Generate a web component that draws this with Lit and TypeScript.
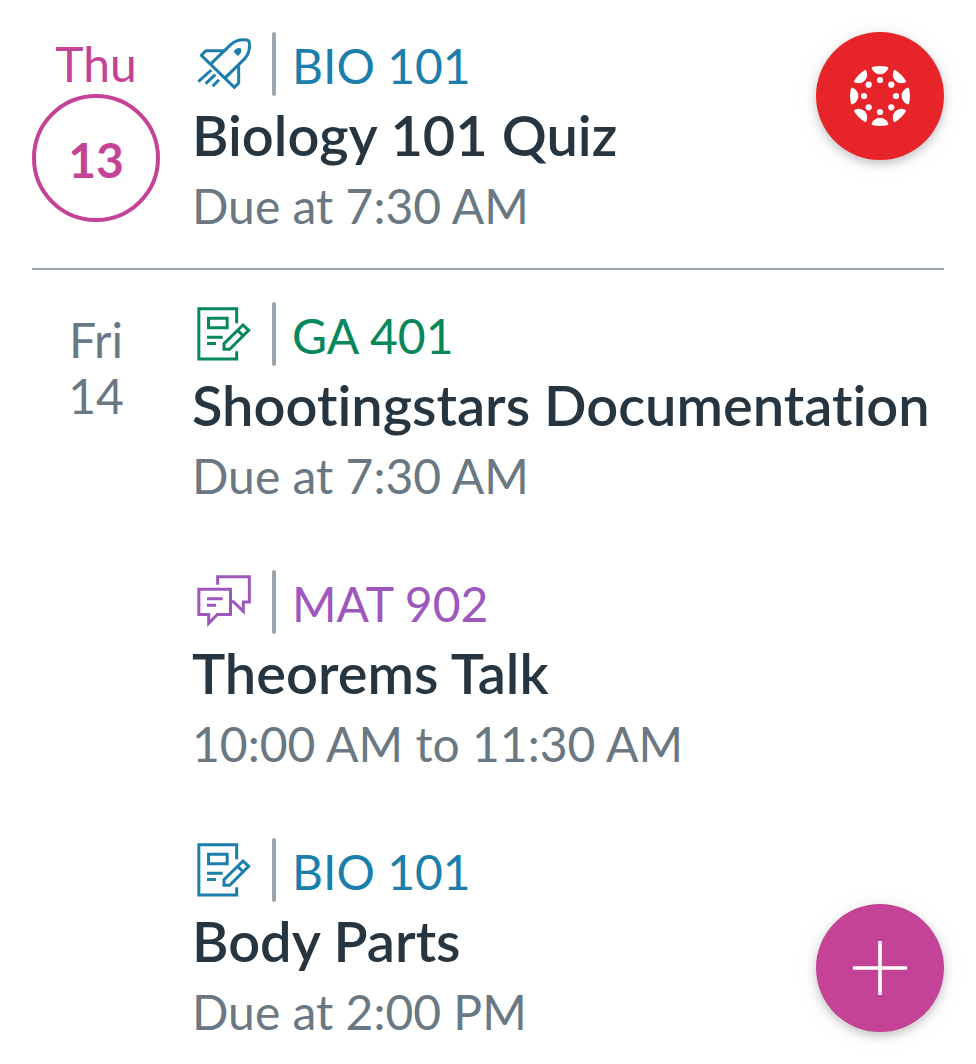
import { LitElement, html, css, svg } from "lit";
import { customElement, property } from "lit/decorators.js";

type IconName = "quiz" | "assignment" | "discussion";

interface Item {
  icon: IconName;
  tone: "blue" | "green" | "purple";
  course: string;
  title: string;
  when: string;
}

interface Day {
  name: string;
  date: string;
  today: boolean;
  items: Item[];
}

const DAYS: Day[] = [
  {
    name: "Thu",
    date: "13",
    today: true,
    items: [
      { icon: "quiz", tone: "blue", course: "BIO 101", title: "Biology 101 Quiz", when: "Due at 7:30 AM" },
    ],
  },
  {
    name: "Fri",
    date: "14",
    today: false,
    items: [
      { icon: "assignment", tone: "green", course: "GA 401", title: "Shootingstars Documentation", when: "Due at 7:30 AM" },
      { icon: "discussion", tone: "purple", course: "MAT 902", title: "Theorems Talk", when: "10:00 AM to 11:30 AM" },
      { icon: "assignment", tone: "blue", course: "BIO 101", title: "Body Parts", when: "Due at 2:00 PM" },
    ],
  },
];

const ICONS = {
  quiz: svg`
    <g stroke-linejoin="round">
      <path d="M82 118 L140 62 C155 49 172 46 188 48 Q195 49 196 56 C198 74 195 90 183 103 L125 160"/>
      <path d="M124 80 H66 L52 94 L151 190 L164 177 V122"/>
    </g>
    <path d="M82 138 L43 173 M94 152 L65 179 M105 167 L86 187"/>
    <path class="solid" d="M149 83 Q155 72 165 72 Q172 71 172 79 Q172 90 161 96 Z"/>`,
  assignment: svg`
    <path d="M158 82 V38 H44.5 V189 H158 V166"/>
    <path d="M73.5 66.5 H129.5 V95.5 H73.5 Z"/>
    <path d="M69 124 H116 M69 142.5 H96"/>
    <path d="M177 87 L194 103 L137 160 H120 V143 Z M161 103 L178 120"/>`,
  discussion: svg`
    <path d="M44.5 76 H139.5 V151.5 H100 L74 178 V151.5 H44.5 Z"/>
    <path d="M101 62 V38 H196 V114 H178 V142 L148 113 H142"/>
    <path d="M69 104.5 H116 M69 123.5 H96"/>`,
};

@customElement("planner-icon")
class PlannerIcon extends LitElement {
  @property() name: IconName = "quiz";

  static styles = css`
    :host { display: block; width: 56px; height: 56px; }
    svg { display: block; width: 100%; height: 100%; }
    path { fill: none; stroke: currentColor; stroke-width: 9; }
    .solid { fill: currentColor; stroke: none; }
  `;

  render() {
    const box = this.name === "quiz" ? "36 36 168 168" : "36 30 168 168";
    return html`<svg viewBox=${box} aria-hidden="true">${ICONS[this.name]}</svg>`;
  }
}

@customElement("planner-item")
class PlannerItem extends LitElement {
  @property({ attribute: false }) item!: Item;

  static styles = css`
    :host { display: block; white-space: nowrap; font-variant-ligatures: none; }
    .head { display: flex; align-items: center; height: 64px; padding-left: 4px; font-size: 48px; line-height: 58px; }
    .bar { width: 4px; height: 64px; margin: 0 16px 0 20px; border-radius: 2px; background: #9ea6ad; }
    .course { padding-top: 4px; }
    .blue { color: #1c7eab; }
    .green { color: #07875c; }
    .purple { color: #9e58bd; }
    .title { margin-top: 5px; font-size: 56px; line-height: 67px; font-weight: 600; color: #273540; }
    .when { margin-top: 9px; font-size: 48px; line-height: 58px; color: #6a7883; }
  `;

  render() {
    const { icon, tone, course, title, when } = this.item;
    return html`
      <div class="head ${tone}">
        <planner-icon name=${icon}></planner-icon>
        <span class="bar"></span>
        <span class="course">${course}</span>
      </div>
      <div class="title">${title}</div>
      <div class="when">${when}</div>
    `;
  }
}

@customElement("app-root")
class AppRoot extends LitElement {
  static styles = css`
    :host {
      display: block;
      position: relative;
      box-sizing: border-box;
      height: 1064px;
      padding: 0 32px;
      overflow: hidden;
      background: #fff;
      font-family: Lato, sans-serif;
    }
    .day { display: grid; grid-template-columns: 128px 1fr; column-gap: 32px; padding: 32px 0 33px; }
    .day + .day { border-top: 2px solid #9ea6ad; }
    .date { display: flex; flex-direction: column; align-items: center; padding-top: 10px; font-size: 48px; line-height: 56px; color: #6a7883; }
    .today { padding-top: 3px; line-height: 58px; color: #c54396; }
    .ring {
      display: grid;
      place-items: center;
      box-sizing: border-box;
      width: 128px;
      height: 128px;
      margin-top: 1px;
      padding-top: 4px;
      border: 4px solid #c54396;
      border-radius: 50%;
      font-weight: 700;
    }
    .items { display: flex; flex-direction: column; gap: 65px; min-width: 0; }
    .fab {
      position: absolute;
      right: 32px;
      display: grid;
      place-items: center;
      width: 128px;
      height: 128px;
      padding: 0;
      border: 0;
      border-radius: 50%;
      box-shadow: 0 4px 10px rgba(0, 0, 0, 0.2), 0 2px 28px rgba(0, 0, 0, 0.06);
    }
    .canvas { top: 32px; background: #e72429; }
    .add { bottom: 32px; background: #c54396; }
    .fab svg { display: block; fill: #fff; }
  `;

  render() {
    const spokes = [0, 1, 2, 3, 4, 5, 6, 7].map((n) => {
      const a = (n * Math.PI) / 4;
      return { x: Math.cos(a), y: Math.sin(a) };
    });
    return html`
      ${DAYS.map(
        (d) => html`
          <section class="day">
            <div class="date ${d.today ? "today" : ""}">
              <span>${d.name}</span>
              <span class=${d.today ? "ring" : ""}>${d.date}</span>
            </div>
            <div class="items">
              ${d.items.map((i) => html`<planner-item .item=${i}></planner-item>`)}
            </div>
          </section>
        `
      )}
      <button class="fab canvas" aria-label="Canvas">
        <svg width="60" height="60" viewBox="-90 -90 180 180">
          <clipPath id="disc"><circle r="90" /></clipPath>
          <g clip-path="url(#disc)">
            ${spokes.map((s) => svg`<circle cx=${s.x * 91} cy=${s.y * 91} r="26"/>`)}
          </g>
          ${spokes.map((s) => svg`<circle cx=${s.x * 48} cy=${s.y * 48} r="9.3"/>`)}
        </svg>
      </button>
      <button class="fab add" aria-label="Add">
        <svg width="54" height="54" viewBox="0 0 54 54">
          <path d="M25.2 0h3.6v25.2H54v3.6H28.8V54h-3.6V28.8H0v-3.6h25.2z" />
        </svg>
      </button>
    `;
  }
}
